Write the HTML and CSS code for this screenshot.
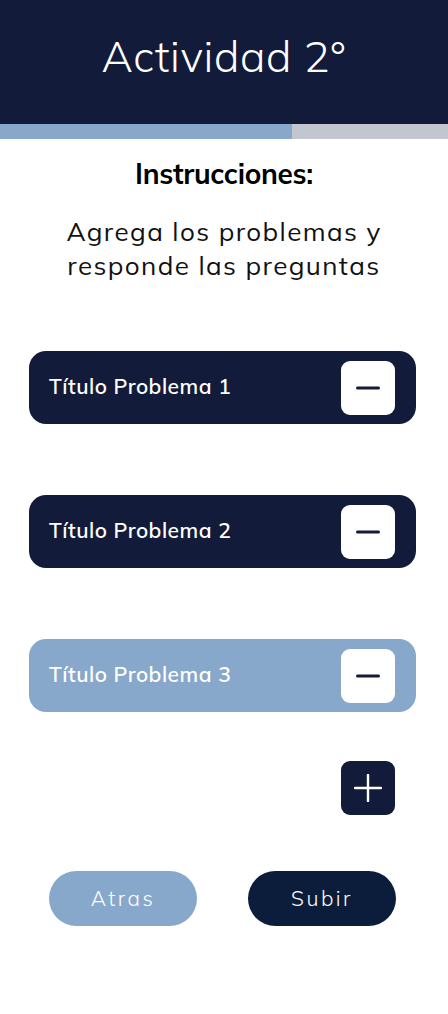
FILE: index.html
```html
<!DOCTYPE html>
<html lang="es">
<head>
<meta charset="utf-8">
<link rel="stylesheet" href="styles.css">
</head>
<body>
<div class="app">
  <header class="header"><h1 class="title">Actividad 2°</h1></header>
  <div class="progress"><div class="progress-fill"></div></div>
  <h2 class="instr-title">Instrucciones:</h2>
  <p class="instr-text">Agrega los problemas y<br>responde las preguntas</p>
  <div class="cards">
    <div class="card dark">
      <span class="card-title">Título Problema 1</span>
      <button class="sq minus"><svg width="24" height="4" viewBox="0 0 24 4"><rect x="0" y="0.5" width="24" height="3" rx="1.5" fill="#121c3a"/></svg></button>
    </div>
    <div class="card dark">
      <span class="card-title">Título Problema 2</span>
      <button class="sq minus"><svg width="24" height="4" viewBox="0 0 24 4"><rect x="0" y="0.5" width="24" height="3" rx="1.5" fill="#121c3a"/></svg></button>
    </div>
    <div class="card light">
      <span class="card-title">Título Problema 3</span>
      <button class="sq minus"><svg width="24" height="4" viewBox="0 0 24 4"><rect x="0" y="0.5" width="24" height="3" rx="1.5" fill="#121c3a"/></svg></button>
    </div>
  </div>
  <div class="add-row">
    <button class="sq plus"><svg width="28" height="28" viewBox="0 0 28 28"><path d="M14 1v26M1 14h26" stroke="#fff" stroke-width="2.4" stroke-linecap="round"/></svg></button>
  </div>
  <div class="actions">
    <button class="pill back">Atras</button>
    <button class="pill submit">Subir</button>
  </div>
</div>
</body>
</html>
```
FILE: styles.css
```css
* { box-sizing: border-box; }
html, body { margin: 0; padding: 0; background: #fff; }
body { font-family: "Mulish", "Nunito", "Lato", "Noto Sans", sans-serif; width: 448px; }
.app { display: flex; flex-direction: column; min-height: 1014px; }
.header { background: #121c3a; height: 124px; display: flex; align-items: center; justify-content: center; }
.title { margin: 0; color: #fff; font-weight: 300; font-size: 43px; letter-spacing: 0.6px; padding-bottom: 12px; }
.progress { height: 15px; background: #c2c6ce; }
.progress-fill { width: 292px; height: 100%; background: #87a8cb; }
.instr-title { margin: 17px 0 0; text-align: center; font-size: 28px; font-weight: 700; color: #000; line-height: 36px; letter-spacing: -0.3px; }
.instr-text { margin: 23px 0 0; text-align: center; font-size: 26px; line-height: 34px; color: #111; letter-spacing: 1.4px; font-weight: 400; }
.cards { display: flex; flex-direction: column; gap: 71px; padding: 0 32px 0 29px; margin-top: 68px; }
.card { height: 73px; border-radius: 17px; display: flex; align-items: center; justify-content: space-between; padding: 0 21px 0 20px; }
.card.dark { background: #121c3a; }
.card.light { background: #87a8cb; }
.card-title { color: #fff; font-size: 21px; font-weight: 600; letter-spacing: 0.5px; padding-bottom: 4px; }
.sq { width: 54px; height: 54px; border: none; border-radius: 9px; display: flex; align-items: center; justify-content: center; padding: 0; }
.minus { background: #fff; }
.plus { background: #121c3a; }
.add-row { display: flex; justify-content: flex-end; padding-right: 53px; margin-top: 49px; }
.actions { display: flex; justify-content: space-between; padding: 0 52px 0 49px; margin-top: 56px; }
.pill { width: 148px; height: 55px; border: none; border-radius: 28px; color: #fff; font-family: inherit; font-size: 21px; letter-spacing: 2.5px; font-weight: 300; padding-bottom: 2px; }
.back { background: #87a8cb; }
.submit { background: #0c1d3b; }
```
